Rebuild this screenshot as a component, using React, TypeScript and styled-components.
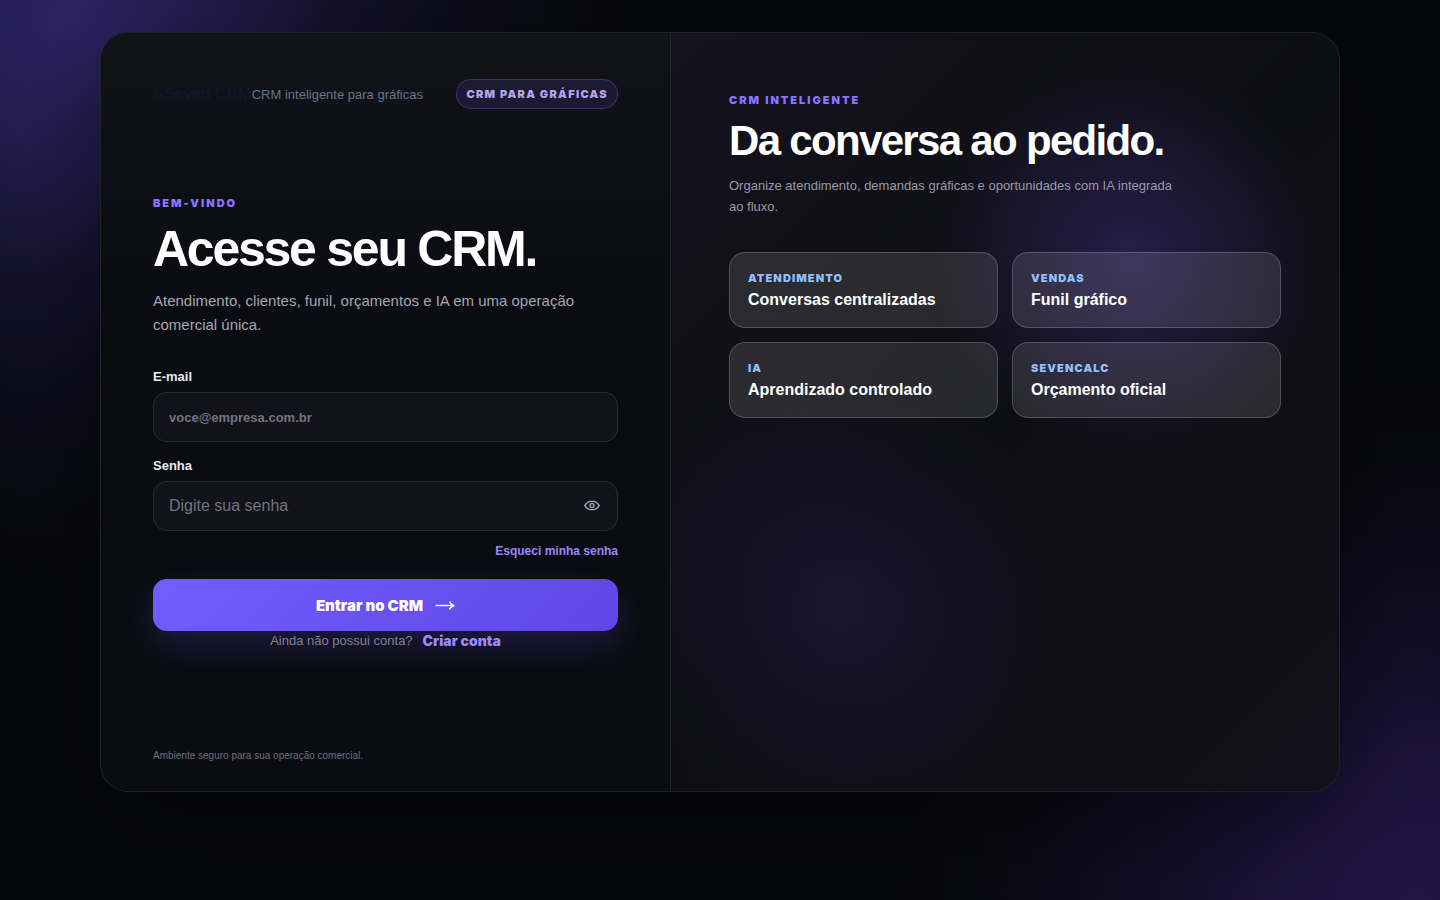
import React, { useState } from "react";
import styled, { createGlobalStyle } from "styled-components";

const black = `font-family: Inter, "Liberation Sans", Arial, sans-serif; font-weight: 900;`;

const GlobalStyle = createGlobalStyle`
  *, *::before, *::after { box-sizing: border-box; }
  body {
    margin: 0;
    background: #050609;
    color: #fff;
    font-family: "Liberation Sans", Arial, Helvetica, sans-serif;
  }
  h1, h2, p { margin: 0; }
  a { text-decoration: none; }
`;

const Page = styled.main`
  min-height: 100vh;
  padding: 32px 24px 108px;
  overflow: hidden;
  background:
    radial-gradient(
      circle at 5% 2%,
      rgba(112, 84, 255, 0.36),
      rgba(112, 84, 255, 0.26) 9%,
      rgba(112, 84, 255, 0.13) 16%,
      rgba(112, 84, 255, 0.06) 23%,
      transparent 35%
    ),
    radial-gradient(
      circle at 98% 100%,
      rgba(104, 62, 230, 0.26),
      rgba(104, 62, 230, 0.21) 8%,
      rgba(104, 62, 230, 0.12) 15%,
      rgba(104, 62, 230, 0.05) 22%,
      transparent 31%
    ),
    #07080c;
`;

const Shell = styled.div`
  display: grid;
  grid-template-columns: 570fr 668fr;
  max-width: 1240px;
  min-height: 760px;
  margin: 0 auto;
  border: 1px solid rgba(255, 255, 255, 0.09);
  border-radius: 28px;
  overflow: hidden;
  background: #0c0d12;
  box-shadow: 0 30px 100px rgba(0, 0, 0, 0.45);
`;

const AccessPane = styled.section`
  display: flex;
  flex-direction: column;
  min-width: 0;
  padding: 46px 52px 27px;
  border-right: 1px solid rgba(255, 255, 255, 0.08);
  background: linear-gradient(180deg, #121318, #0b0c11 35%, #0b0c11);
`;

const TopBar = styled.header`
  display: flex;
  align-items: center;
  justify-content: space-between;
  gap: 16px;
`;

const Brand = styled.div`
  display: flex;
  align-items: baseline;
  color: #0f172a;
  font-size: 16px;
  line-height: 20px;
  white-space: nowrap;
`;

const Tagline = styled.small`
  color: #64748b;
  font-size: 13px;
`;

const Badge = styled.span`
  ${black}
  padding: 0 9px;
  border: 1px solid rgba(124, 92, 255, 0.32);
  border-radius: 15px;
  background: rgba(124, 92, 255, 0.12);
  color: #b3a4ec;
  font-size: 11px;
  line-height: 28px;
  letter-spacing: 0.12em;
  white-space: nowrap;
`;

const Content = styled.div`
  display: flex;
  flex: 1;
  flex-direction: column;
  justify-content: center;
  padding-bottom: 10px;
`;

const Eyebrow = styled.p`
  ${black}
  color: #8b74ff;
  font-size: 11px;
  line-height: 14px;
  letter-spacing: 0.18em;
`;

const Title = styled.h1`
  margin-top: 14px;
  font-size: 50px;
  line-height: 50px;
  letter-spacing: -0.045em;
`;

const Lead = styled.p`
  margin-top: 15px;
  color: #a5a6b3;
  font-size: 15px;
  line-height: 24px;
`;

const Form = styled.form`
  display: flex;
  flex-direction: column;
  margin-top: 32px;
`;

const FieldGroup = styled.div`
  display: flex;
  flex-direction: column;
  gap: 8px;
  & + & { margin-top: 16px; }
`;

const Label = styled.label`
  color: #e9e9f0;
  font-size: 13px;
  font-weight: 700;
  line-height: 15px;
`;

const Field = styled.div`
  display: flex;
  align-items: center;
  height: 50px;
  padding: 0 16px 0 15px;
  border: 1px solid rgba(255, 255, 255, 0.1);
  border-radius: 14px;
  background: #12121a;
`;

const Input = styled.input<{ $strong?: boolean }>`
  flex: 1;
  min-width: 0;
  height: 100%;
  padding: 0;
  border: 0;
  outline: 0;
  background: transparent;
  color: #fff;
  font-family: inherit;
  font-size: ${(p) => (p.$strong ? 13 : 16)}px;
  font-weight: ${(p) => (p.$strong ? 700 : 400)};
  &::placeholder { color: #72737f; opacity: 1; }
`;

const EyeButton = styled.button`
  display: grid;
  place-items: center;
  padding: 0;
  border: 0;
  background: none;
  color: #9a9aa8;
  cursor: pointer;
`;

const Forgot = styled.a`
  align-self: flex-end;
  margin: 12px 0 20px;
  color: #9b87fa;
  font-size: 12px;
  font-weight: 700;
  line-height: 16px;
`;

const Submit = styled.button`
  ${black}
  display: flex;
  align-items: center;
  justify-content: center;
  gap: 12px;
  height: 52px;
  border: 0;
  border-radius: 14px;
  background: linear-gradient(135deg, #755cff, #5f46e5);
  box-shadow: 0 14px 34px rgba(109, 84, 255, 0.2);
  color: #fff;
  font-size: 15px;
  cursor: pointer;
`;

const SignUp = styled.p`
  display: flex;
  align-items: center;
  justify-content: center;
  gap: 10px;
  color: #82828e;
  font-size: 13px;
  line-height: 20px;
`;

const SignUpLink = styled.a`
  ${black}
  color: #9b87fa;
  font-size: 14px;
`;

const Footnote = styled.footer`
  color: #6f707b;
  font-size: 10px;
  line-height: 16px;
`;

const ShowcasePane = styled.section`
  min-width: 0;
  padding: 60px 58px;
  background:
    radial-gradient(circle at 69% 30%, rgba(112, 80, 245, 0.25), transparent 28%),
    radial-gradient(circle at 25% 75%, rgba(88, 56, 205, 0.15), transparent 30%),
    linear-gradient(135deg, #15131f, #0d0e12 48%, #13111b);
`;

const ShowcaseTitle = styled.h2`
  margin-top: 12px;
  font-size: 42px;
  line-height: 44px;
  letter-spacing: -0.04em;
`;

const ShowcaseText = styled.p`
  max-width: 460px;
  margin-top: 12px;
  color: #9a9aa8;
  font-size: 13px;
  line-height: 21px;
`;

const Cards = styled.div`
  display: grid;
  grid-template-columns: 1fr 1fr;
  gap: 14px;
  margin-top: 35px;
`;

const Card = styled.article`
  display: flex;
  flex-direction: column;
  gap: 2px;
  padding: 18px 18px 14px;
  border: 1px solid rgba(255, 255, 255, 0.18);
  border-radius: 16px;
  background: rgba(255, 255, 255, 0.11);
`;

const CardTag = styled.span`
  ${black}
  color: #8fc0fb;
  font-size: 11px;
  line-height: 14px;
  letter-spacing: 0.1em;
`;

const CardName = styled.strong`
  font-size: 16px;
  line-height: 26px;
`;

const features = [
  ["ATENDIMENTO", "Conversas centralizadas"],
  ["VENDAS", "Funil gráfico"],
  ["IA", "Aprendizado controlado"],
  ["SEVENCALC", "Orçamento oficial"],
];

const EyeIcon = () => (
  <svg width="18" height="18" viewBox="0 0 18 18" fill="none" stroke="currentColor" strokeWidth="1.500" aria-hidden="true">
    <path d="M1.800 8.500S4.300 4.200 9 4.200 16.200 8.500 16.200 8.500 13.700 12.800 9 12.800 1.800 8.500 1.800 8.500Z" />
    <circle cx="9" cy="8.500" r="2" />
  </svg>
);

const ArrowIcon = () => (
  <svg width="20" height="10" viewBox="0 0 20 10" fill="none" stroke="currentColor" strokeWidth="1.400" aria-hidden="true">
    <path d="M0.500 5.500H19" />
    <path d="M14.500 1.500C15.500 3.700 17 5 19.300 5.500 17 6 15.500 7.300 14.500 9.500" />
  </svg>
);

export default function App() {
  const [visible, setVisible] = useState(false);
  return (
    <>
      <GlobalStyle />
      <Page>
        <Shell>
          <AccessPane>
            <TopBar>
              <Brand>
                <span>S</span>
                <strong>Seven CRM</strong>
                <Tagline>CRM inteligente para gráficas</Tagline>
              </Brand>
              <Badge>CRM PARA GRÁFICAS</Badge>
            </TopBar>
            <Content>
              <Eyebrow>BEM-VINDO</Eyebrow>
              <Title>Acesse seu CRM.</Title>
              <Lead>Atendimento, clientes, funil, orçamentos e IA em uma operação comercial única.</Lead>
              <Form onSubmit={(e) => e.preventDefault()}>
                <FieldGroup>
                  <Label htmlFor="email">E-mail</Label>
                  <Field>
                    <Input id="email" type="email" placeholder="voce@empresa.com.br" $strong />
                  </Field>
                </FieldGroup>
                <FieldGroup>
                  <Label htmlFor="password">Senha</Label>
                  <Field>
                    <Input id="password" type={visible ? "text" : "password"} placeholder="Digite sua senha" />
                    <EyeButton type="button" aria-label="Mostrar senha" onClick={() => setVisible(!visible)}>
                      <EyeIcon />
                    </EyeButton>
                  </Field>
                </FieldGroup>
                <Forgot href="#recuperar">Esqueci minha senha</Forgot>
                <Submit type="submit">
                  Entrar no CRM
                  <ArrowIcon />
                </Submit>
              </Form>
              <SignUp>
                Ainda não possui conta? <SignUpLink href="#criar">Criar conta</SignUpLink>
              </SignUp>
            </Content>
            <Footnote>Ambiente seguro para sua operação comercial.</Footnote>
          </AccessPane>
          <ShowcasePane>
            <Eyebrow>CRM INTELIGENTE</Eyebrow>
            <ShowcaseTitle>Da conversa ao pedido.</ShowcaseTitle>
            <ShowcaseText>
              Organize atendimento, demandas gráficas e oportunidades com IA integrada ao fluxo.
            </ShowcaseText>
            <Cards>
              {features.map(([tag, name]) => (
                <Card key={tag}>
                  <CardTag>{tag}</CardTag>
                  <CardName>{name}</CardName>
                </Card>
              ))}
            </Cards>
          </ShowcasePane>
        </Shell>
      </Page>
    </>
  );
}
